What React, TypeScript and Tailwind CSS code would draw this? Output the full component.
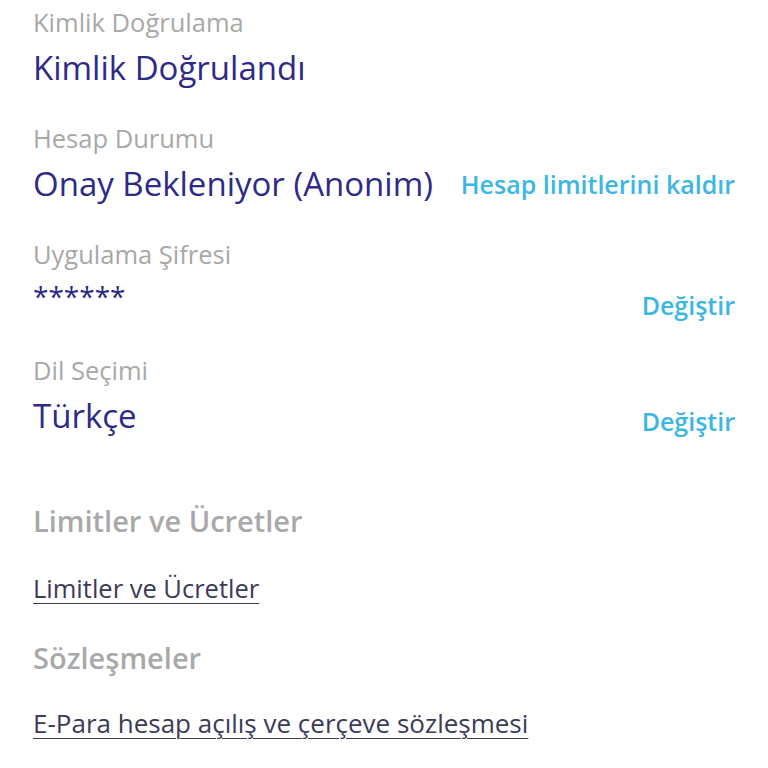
export default function App() {
  const font = { fontFamily: "'Open Sans', 'Noto Sans', sans-serif" };
  return (
    <div className="min-h-screen bg-white px-[33px] pt-[7px]" style={font}>
      <Row label="Kimlik Doğrulama" value="Kimlik Doğrulandı" />
      <Row
        label="Hesap Durumu"
        value="Onay Bekleniyor (Anonim)"
        action="Hesap limitlerini kaldır"
        center
      />
      <Row label="Uygulama Şifresi" value="******" action="Değiştir" small />
      <Row label="Dil Seçimi" value="Türkçe" action="Değiştir" />

      <h3 className="mt-[69px] text-[29px] leading-[32px] font-semibold text-[#a9a9a9]">
        Limitler ve Ücretler
      </h3>
      <a className="mt-[36px] block text-[25.5px] leading-[30px] text-[#3b3b58] underline underline-offset-[5px] decoration-1">
        Limitler ve Ücretler
      </a>
      <h3 className="mt-[39px] text-[29px] leading-[32px] font-semibold text-[#a9a9a9]">
        Sözleşmeler
      </h3>
      <a className="mt-[34px] block text-[26px] leading-[30px] text-[#3b3b58] underline underline-offset-[5px] decoration-1">
        E-Para hesap açılış ve çerçeve sözleşmesi
      </a>
    </div>
  );
}

function Row({
  label,
  value,
  action,
  center,
  small,
}: {
  label: string;
  value: string;
  action?: string;
  center?: boolean;
  small?: boolean;
}) {
  return (
    <div className="mb-[35px]">
      <div className="text-[25.5px] leading-[30px] text-[#a8a8a8]">{label}</div>
      <div
        className={`mt-[11px] flex justify-between ${
          center ? "items-center" : "items-end"
        }`}
      >
        <span
          className={`leading-[40px] text-[#2e2a86] ${
            small ? "text-[28px] -translate-y-[4px]" : "text-[33px]"
          }`}
        >
          {value}
        </span>
        {action && (
          <button className="text-[25px] leading-[30px] font-semibold text-[#3cb6e2]">
            {action}
          </button>
        )}
      </div>
    </div>
  );
}
